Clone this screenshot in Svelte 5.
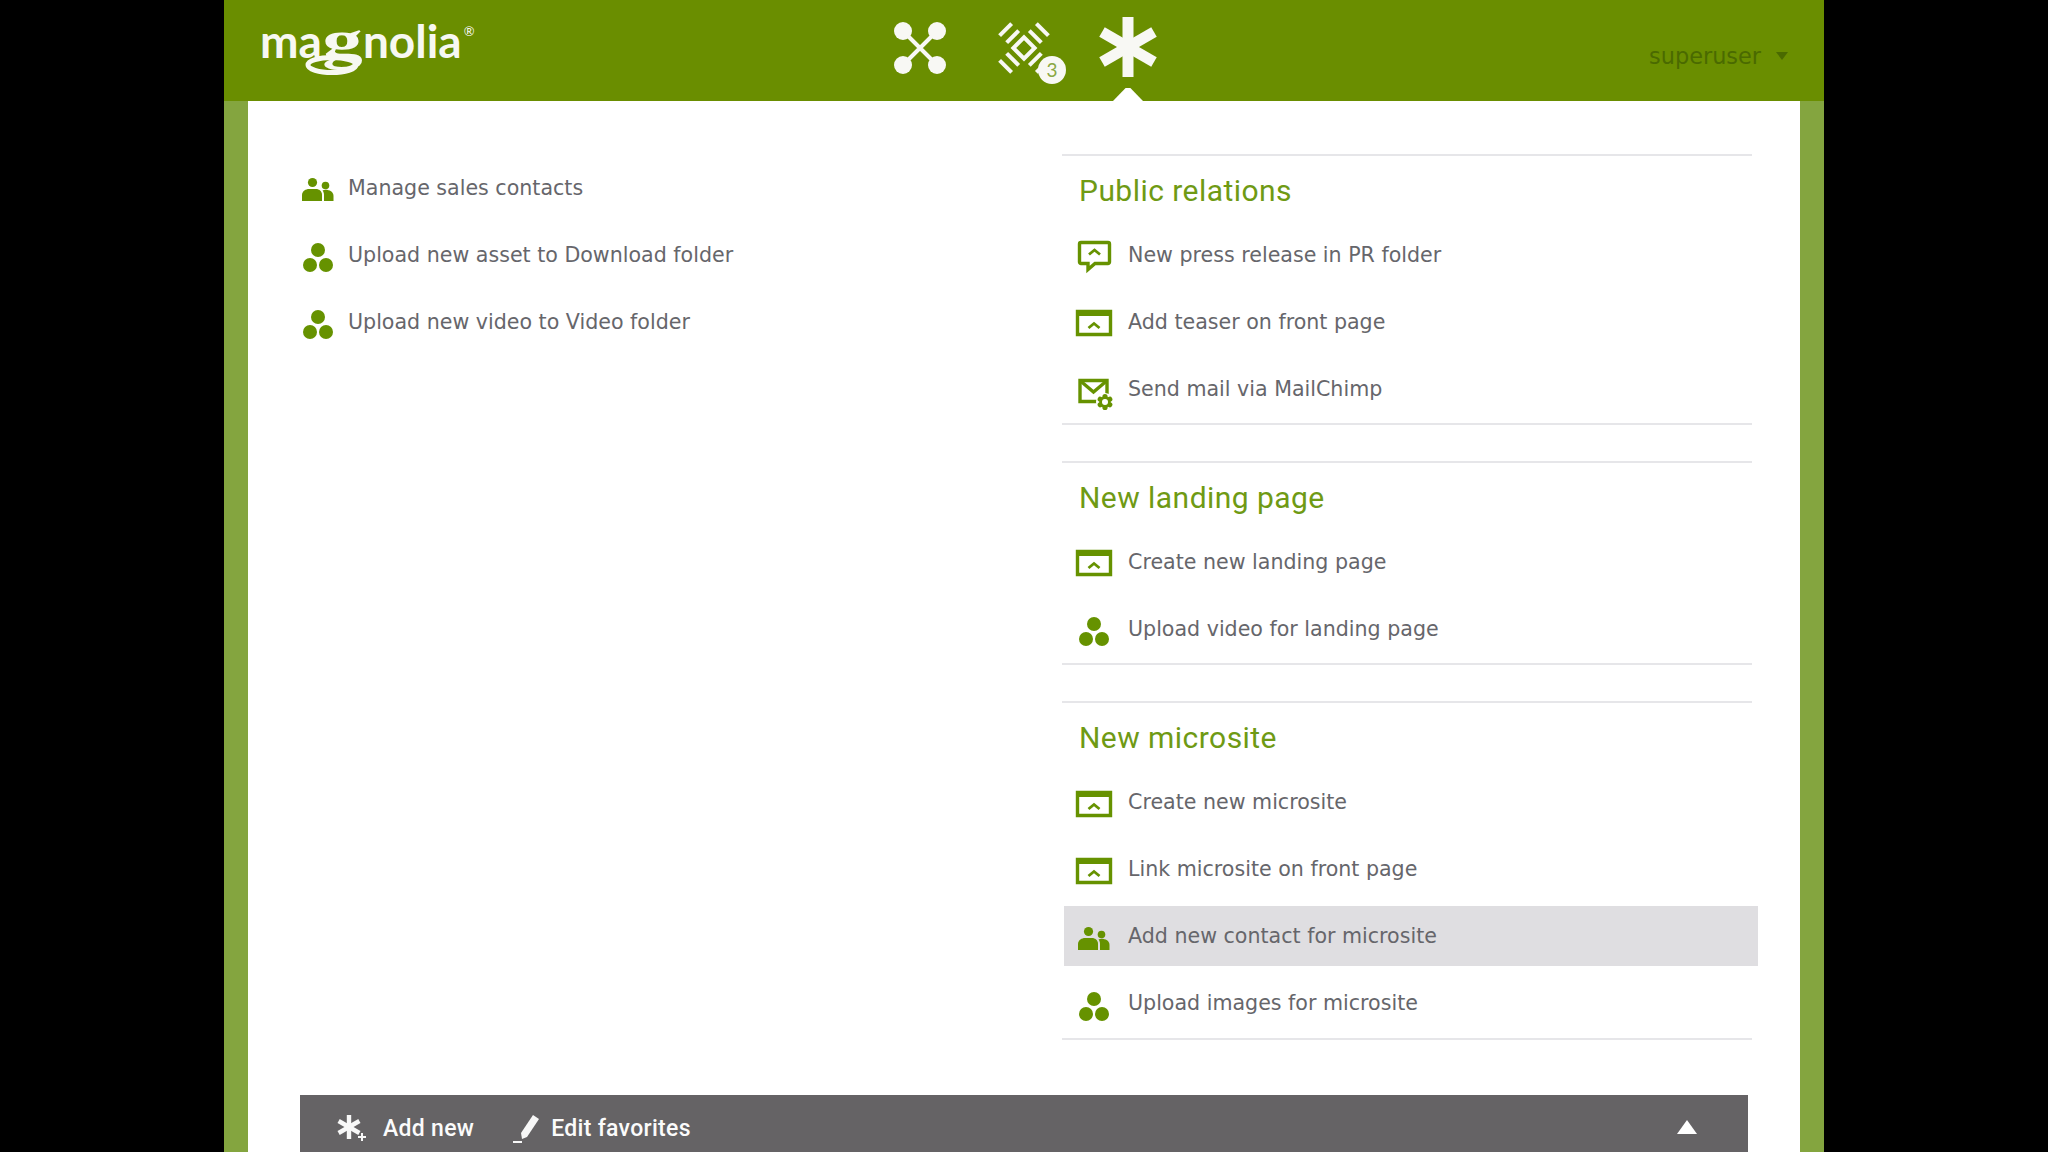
<script>
  const left = [
    { icon: 'people', label: 'Manage sales contacts' },
    { icon: 'assets', label: 'Upload new asset to Download folder' },
    { icon: 'assets', label: 'Upload new video to Video folder' }
  ];
  const sections = [
    { title: 'Public relations', items: [
      { icon: 'bubble', label: 'New press release in PR folder' },
      { icon: 'page', label: 'Add teaser on front page' },
      { icon: 'mail', label: 'Send mail via MailChimp' }
    ]},
    { title: 'New landing page', items: [
      { icon: 'page', label: 'Create new landing page' },
      { icon: 'assets', label: 'Upload video for landing page' }
    ]},
    { title: 'New microsite', items: [
      { icon: 'page', label: 'Create new microsite' },
      { icon: 'page', label: 'Link microsite on front page' },
      { icon: 'people', label: 'Add new contact for microsite', active: true },
      { icon: 'assets', label: 'Upload images for microsite' }
    ]}
  ];
  const angles = [45, 135, 225, 315];
</script>

{#snippet icon(name)}
  <svg class="icon" viewBox="0 0 36 34" width="36" height="34" aria-hidden="true">
    {#if name === 'people'}
      <circle cx="12.5" cy="12.5" r="4.6" />
      <circle cx="25.5" cy="15.5" r="3.8" />
      <path d="M2 31v-6c0-4 4-6 7-6h7c3 0 6 2 6 6v6z" />
      <path d="M24 31v-6c0-2-.6-3.500-1.500-4.500 1-.6 2-.8 3-.8 4 0 8 2 8 6v5.300z" />
    {:else if name === 'assets'}
      <circle cx="18" cy="13" r="7" />
      <circle cx="10" cy="28" r="7" />
      <circle cx="26" cy="28" r="7" />
    {:else if name === 'bubble'}
      <path class="line" d="M5 5.500h27a1.500 1.500 0 0 1 1.500 1.500v18a1.500 1.500 0 0 1-1.500 1.500H19l-7 6v-6H5a1.500 1.500 0 0 1-1.500-1.500V7A1.500 1.500 0 0 1 5 5.500z" />
      <path class="line thin" d="M13 17.500l5.500-4.500 5.500 4.500" />
    {:else if name === 'page'}
      <path class="line" d="M1.500 7.500h33v23h-33z" />
      <rect x="0" y="6" width="36" height="6" />
      <path class="line thin" d="M12.500 24l5.500-4.500 5.500 4.500" />
    {:else if name === 'mail'}
      <path class="line" d="M4 9.500h27v21H4z" />
      <path class="line" d="M4.500 10l13 11 13-11" />
      <circle cx="29" cy="31" r="9" class="knock" />
      <circle cx="29" cy="31" r="4" class="line" />
      {#each [0, 60, 120, 180, 240, 300] as a}
        <circle cx="29" cy="25.500" r="2.600" transform="rotate({a} 29 31)" />
      {/each}
      <circle cx="29" cy="31" r="3" class="knock" />
    {/if}
  </svg>
{/snippet}

<div class="app">
  <header class="top">
    <div class="logo">
      <span class="logo-ma">ma</span><span class="logo-g">g</span><span class="logo-rest">nolia</span><sup class="logo-r">®</sup>
      <svg class="logo-loop" viewBox="0 0 60 24" width="60" height="24" aria-hidden="true">
        <ellipse cx="30" cy="12" rx="24" ry="7.500" />
      </svg>
    </div>

    <nav class="apps">
      <svg class="app-icon a1" viewBox="0 0 60 60" width="60" height="60" aria-hidden="true">
        <path d="M13 13l34 34M47 13L13 47" />
        <circle cx="13" cy="13" r="9" /><circle cx="47" cy="13" r="9" />
        <circle cx="13" cy="47" r="9" /><circle cx="47" cy="47" r="9" />
      </svg>
      <div class="a2">
        <svg viewBox="0 0 70 70" width="70" height="70" aria-hidden="true">
          <g transform="rotate(45 35 35)">
            <rect x="27.500" y="27.500" width="15" height="15" />
            {#each angles as a}
              <g transform="rotate({a - 45} 35 35)">
                <rect class="tick" x="26.500" y="17" width="17" height="4" />
                <rect class="tick" x="26.500" y="7" width="17" height="4" />
              </g>
            {/each}
          </g>
        </svg>
        <span class="badge">3</span>
      </div>
      <div class="a3">
        <svg viewBox="0 0 60 60" width="60" height="60" aria-hidden="true">
          <rect x="24.500" y="0" width="11" height="60" />
          <rect x="24.500" y="0" width="11" height="60" transform="rotate(60 30 30)" />
          <rect x="24.500" y="0" width="11" height="60" transform="rotate(120 30 30)" />
        </svg>
        <span class="pointer"></span>
      </div>
    </nav>

    <div class="user">superuser<span class="caret"></span></div>
  </header>

  <main class="panel">
    <div class="columns">
      <ul class="favs">
        {#each left as it}
          <li class="row">{@render icon(it.icon)}<span class="label">{it.label}</span></li>
        {/each}
      </ul>
      <div class="groups">
        {#each sections as s}
          <section class="group">
            <h2>{s.title}</h2>
            <ul>
              {#each s.items as it}
                <li class="row" class:active={it.active}>{@render icon(it.icon)}<span class="label">{it.label}</span></li>
              {/each}
            </ul>
          </section>
        {/each}
      </div>
    </div>

    <footer class="dock">
      <div class="action first">
        <svg viewBox="0 0 30 28" width="30" height="28" aria-hidden="true">
          <g transform="translate(11 12)">
            <rect x="-2.200" y="-12" width="4.400" height="24" />
            <rect x="-2.200" y="-12" width="4.400" height="24" transform="rotate(60)" />
            <rect x="-2.200" y="-12" width="4.400" height="24" transform="rotate(120)" />
          </g>
          <path class="plus" d="M20 22h8M24 18v8" />
        </svg>
        <span>Add new</span>
      </div>
      <div class="action second">
        <svg viewBox="0 0 30 30" width="30" height="30" aria-hidden="true">
          <path d="M22 1l6 4-12 18-5 2-1-6z" />
          <path class="plus" d="M2 28h9" />
        </svg>
        <span>Edit favorites</span>
      </div>
      <span class="collapse"></span>
    </footer>
  </main>
</div>

<style>
  :global(body) {
    margin: 0;
    background: #000;
  }
  .app {
    width: 1600px;
    height: 1152px;
    margin: 0 auto;
    display: flex;
    flex-direction: column;
    overflow: hidden;
    background: #84a53f;
  }
  .top {
    flex: none;
    height: 101px;
    position: relative;
    display: flex;
    align-items: center;
    background: #6a8e00;
  }
  .logo {
    position: relative;
    margin: -20px 0 0 36px;
    display: flex;
    align-items: baseline;
    color: #f7f8f2;
    font-family: "Lato", sans-serif;
    font-weight: 700;
    font-size: 46px;
    line-height: 46px;
  }
  .logo-g {
    display: inline-block;
    font-family: "Liberation Serif", serif;
    font-weight: 700;
    font-size: 54px;
    transform: scaleX(1.5);
    margin: 0 7px 0 7px;
  }
  .logo-r {
    font-size: 13px;
    line-height: 13px;
    align-self: flex-start;
    margin: 8px 0 0 2px;
    font-weight: 400;
  }
  .logo-loop {
    position: absolute;
    left: 42px;
    top: 36px;
  }
  .logo-loop ellipse {
    fill: none;
    stroke: #f7f8f2;
    stroke-width: 5;
  }
  .apps {
    position: absolute;
    left: 666px;
    top: 0;
    height: 101px;
    display: flex;
    align-items: flex-start;
  }
  .apps svg { display: block; }
  .a1 {
    margin: 18px 0 0 0;
  }
  .a1 path {
    fill: none;
    stroke: #f8f8f4;
    stroke-width: 4;
  }
  .a1 circle { fill: #f8f8f4; }
  .a2 {
    position: relative;
    margin: 13px 0 0 39px;
  }
  .a2 rect {
    fill: none;
    stroke: #f8f8f4;
    stroke-width: 4;
  }
  .a2 rect.tick {
    fill: #f8f8f4;
    stroke: none;
  }
  .badge {
    position: absolute;
    left: 49px;
    top: 43px;
    width: 28px;
    height: 28px;
    border-radius: 50%;
    background: #f8f8f4;
    color: #8aa845;
    font: 400 19px/28px "Lato", sans-serif;
    text-align: center;
  }
  .a3 {
    position: relative;
    height: 101px;
    margin-left: 39px;
    padding-top: 17px;
    box-sizing: border-box;
  }
  .a3 rect { fill: #f8f8f4; }
  .pointer {
    position: absolute;
    left: 15px;
    bottom: 0;
    width: 30px;
    height: 13px;
    background: #fff;
    clip-path: polygon(0 100%, 42% 0, 58% 0, 100% 100%);
  }
  .user {
    margin-left: auto;
    margin-right: 36px;
    margin-top: 11px;
    display: flex;
    align-items: center;
    color: #4a6a00;
    font: 400 22.400px/24px "DejaVu Sans", sans-serif;
  }
  .caret {
    margin-left: 15px;
    width: 0;
    height: 0;
    border-left: 6px solid transparent;
    border-right: 6px solid transparent;
    border-top: 8px solid #4a6a00;
  }
  .panel {
    flex: 1;
    min-height: 0;
    margin: 0 24px;
    padding: 0 52px;
    background: #fff;
    display: flex;
    flex-direction: column;
  }
  .columns {
    display: grid;
    grid-template-columns: 762px 690px;
  }
  ul {
    list-style: none;
    margin: 0;
    padding: 0;
    display: flex;
    flex-direction: column;
    gap: 7px;
  }
  .favs {
    padding-top: 56px;
    margin-left: -14px;
  }
  .row {
    height: 60px;
    display: flex;
    align-items: center;
    padding-left: 12px;
    color: #66666b;
    font: 400 20.600px/24px "DejaVu Sans", sans-serif;
  }
  .label { padding-top: 1px; }
  .favs .row { padding-left: 14px; }
  .favs .icon { margin-right: 12px; }
  .groups {
    padding-top: 53px;
  }
  .group {
    border-top: 2px solid #e6e6e9;
    border-bottom: 2px solid #e6e6e9;
    padding-bottom: 5px;
    margin-bottom: 35.500px;
  }
  .group:nth-child(2) { margin-bottom: 36px; }
  .group:last-child { margin-bottom: 0; }
  .group ul {
    margin: 0 -6px 0 2px;
  }
  .active { background: #dfdee1; }
  h2 {
    margin: 0;
    height: 68.400px;
    padding: 2px 0 0 17px;
    box-sizing: border-box;
    display: flex;
    align-items: center;
    color: #6f9a14;
    font: 400 30px/36px "Roboto", sans-serif;
    letter-spacing: 0.450px;
  }
  .icon {
    flex: none;
    margin-right: 16px;
    fill: #669200;
    overflow: visible;
  }
  .line {
    fill: none;
    stroke: #669200;
    stroke-width: 3.400;
  }
  .line.thin { stroke-width: 2.800; }
  .knock { fill: #fff; }
  .active .knock { fill: #dfdee1; }
  .dock {
    margin-top: 55.500px;
    flex: none;
    height: 64px;
    display: flex;
    align-items: center;
    position: relative;
    padding-left: 38px;
    padding-top: 4px;
    box-sizing: border-box;
    background: #656365;
    color: #fbfbfb;
    font: 500 23px/30px "Roboto", sans-serif;
    letter-spacing: 0.300px;
  }
  .action {
    display: flex;
    align-items: center;
    gap: 15px;
  }
  .action.first { margin-right: 37px; }
  .action.second { gap: 10px; }
  .action svg { fill: #f8f8f8; overflow: visible; }
  .plus {
    fill: none;
    stroke: #f8f8f8;
    stroke-width: 2;
  }
  .collapse {
    position: absolute;
    right: 51px;
    top: 25px;
    width: 0;
    height: 0;
    border-left: 10px solid transparent;
    border-right: 10px solid transparent;
    border-bottom: 14px solid #fff;
  }
</style>
